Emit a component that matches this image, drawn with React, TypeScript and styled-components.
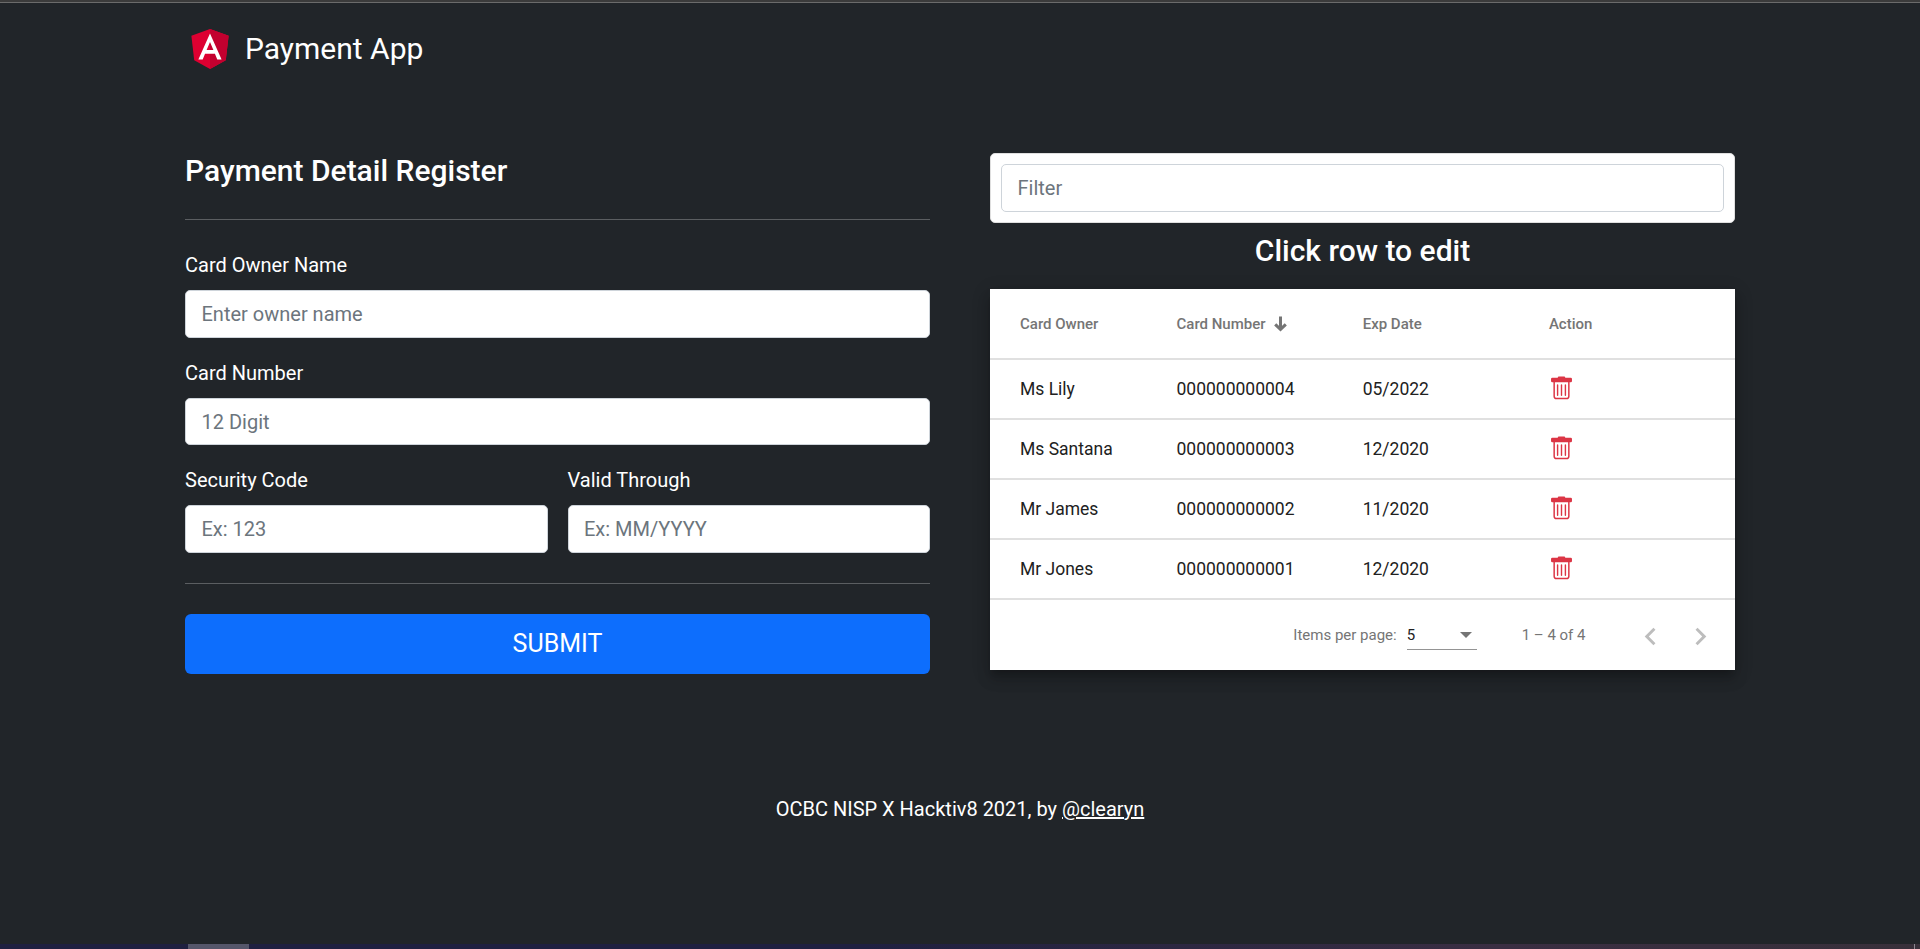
import React from 'react';
import styled, { createGlobalStyle } from 'styled-components';

const GlobalStyle = createGlobalStyle`
  *, *::before, *::after { box-sizing: border-box; }
  body {
    margin: 0;
    background: #212529;
    color: #fff;
    font-family: Roboto, "Liberation Sans", sans-serif;
    font-size: 20px;
    line-height: 30px;
    overflow: hidden;
  }
`;

const Page = styled.div`
  height: 949px;
  display: flex;
  flex-direction: column;
`;

const TopStrip = styled.div`
  height: 3px;
  flex: none;
  background: #3b3b3b;
  border-bottom: 1px solid #6b6b6b;
`;

const Container = styled.div`
  width: 1550px;
  margin: 0 auto;
`;

const Navbar = styled.header`
  height: 150px;
  padding-top: 20px;
  display: flex;
  align-items: flex-start;
`;

const Logo = styled.svg`
  width: 50px;
  height: 50px;
`;

const Brand = styled.span`
  margin: 8px 0 0 10px;
  font-size: 30px;
  line-height: 36px;
`;

const Columns = styled.main`
  height: 640px;
  display: grid;
  grid-template-columns: 745px 745px;
  column-gap: 60px;
  align-items: start;
`;

const Heading = styled.h4<{ $center?: boolean }>`
  margin: 0;
  font-size: 30px;
  font-weight: 500;
  line-height: 36px;
  text-align: ${(p) => (p.$center ? 'center' : 'left')};
`;

const Rule = styled.hr`
  height: 1px;
  margin: 30px 0;
  border: 0;
  background: #5b5e61;
`;

const Fields = styled.div`
  display: grid;
  grid-template-columns: 1fr 1fr;
  gap: 20px;
  padding-top: 0.25px;
`;

const Field = styled.label<{ $wide?: boolean }>`
  display: flex;
  flex-direction: column;
  gap: 10px;
  grid-column: ${(p) => (p.$wide ? '1 / -1' : 'auto')};
`;

const Input = styled.input`
  width: 100%;
  height: 47.5px;
  padding: 0 15px 0 15.5px;
  border: 1px solid #ced4da;
  border-radius: 5px;
  background: #fff;
  color: #212529;
  font: 400 20px/30px Roboto, "Liberation Sans", sans-serif;
  &::placeholder { color: #6c757d; opacity: 1; }
`;

const Submit = styled.button`
  display: block;
  width: 100%;
  height: 60px;
  border: 0;
  border-radius: 6px;
  background: #0d6efd;
  color: #fff;
  font: 400 25px/37px Roboto, "Liberation Sans", sans-serif;
`;

const FilterCard = styled.div`
  height: 70px;
  margin-bottom: 10px;
  padding: 10px;
  border: 1px solid #dfdfdf;
  border-radius: 5px;
  background: #fff;
`;

const TableCard = styled.section`
  height: 381px;
  margin-top: 20px;
  background: #fff;
  color: #212121;
  box-shadow: 0 6px 6px -4px rgba(0, 0, 0, 0.2), 0 10px 12px 1px rgba(0, 0, 0, 0.14),
    0 4px 17px 2px rgba(0, 0, 0, 0.12);
`;

const Row = styled.div<{ $head?: boolean }>`
  height: ${(p) => (p.$head ? 71 : 60)}px;
  padding-left: 30px;
  display: grid;
  grid-template-columns: 156.5px 186.2px 186.2px 1fr;
  align-items: center;
  border-bottom: 2px solid #e0e0e0;
  color: ${(p) => (p.$head ? '#757575' : '#212121')};
  font-size: ${(p) => (p.$head ? 15 : 17.5)}px;
  font-weight: ${(p) => (p.$head ? 500 : 400)};
`;

const Cell = styled.div`
  display: flex;
  align-items: center;
`;

const SortArrow = styled.svg`
  width: 15px;
  height: 16px;
  margin-left: 7px;
`;

const Trash = styled.svg`
  width: 25px;
  height: 25px;
  margin-bottom: 3px;
`;

const Paginator = styled.div`
  height: 70px;
  padding-right: 9.5px;
  display: flex;
  align-items: center;
  justify-content: flex-end;
  color: #757575;
  font-size: 15px;
`;

const PageSize = styled.div`
  width: 70px;
  height: 30px;
  margin: 0 45px 0 10px;
  padding: 0 5px 0 0;
  display: flex;
  align-items: center;
  justify-content: space-between;
  border-bottom: 1px solid #949494;
  color: #212121;
`;

const Range = styled.span`
  margin-right: 40px;
`;

const PageButton = styled.div`
  width: 50px;
  height: 50px;
  padding: 3px 0 0;
  display: flex;
  align-items: center;
  justify-content: center;
`;

const Footer = styled.footer`
  text-align: center;
  flex: 1;
  padding-top: 1px;
  a { color: #fff; text-decoration: underline; }
`;

const BottomStrip = styled.div`
  height: 5px;
  flex: none;
  padding: 0 5px 0 188px;
  display: flex;
  justify-content: space-between;
  background: linear-gradient(90deg, #1f2040 0%, #1f2040 45%, #3a2e42 78%, #38303a 100%);
`;

const ActiveMark = styled.div`
  width: 61px;
  background: #55566a;
`;

const EdgeMark = styled.div`
  width: 1px;
  background: #8b8790;
`;

const rows = [
  ['Ms Lily', '000000000004', '05/2022'],
  ['Ms Santana', '000000000003', '12/2020'],
  ['Mr James', '000000000002', '11/2020'],
  ['Mr Jones', '000000000001', '12/2020'],
];

const AngularLogo = () => (
  <Logo viewBox="0 0 250 250">
    <path fill="#dd0031" d="M125 30 31.9 63.2l14.2 123.1L125 230l78.9-43.7 14.2-123.1z" />
    <path fill="#c3002f" d="M125 30v200l78.9-43.7 14.2-123.1z" />
    <path
      fill="#fff"
      d="M125 52.1 66.8 182.6h21.7l11.7-29.2h49.4l11.7 29.2H183zm17 83.3h-34l17-40.9z"
    />
  </Logo>
);

const TrashIcon = () => (
  <Trash viewBox="0 0 16 16" fill="#dc3545">
    <path d="M6 .9h4l.5.9h3.4q.8 0 .8.8v1.3q0 .8-.8.8H2.1q-.8 0-.8-.8V2.6q0-.8.8-.8h3.4z" />
    <path
      d="M3.3 4v9.6q0 1.5 1.5 1.5h6.4q1.5 0 1.5-1.5V4"
      fill="none"
      stroke="#dc3545"
      strokeWidth="0.95"
    />
    <path d="M5.5 6.4v6.6M8 6.4v6.6M10.5 6.4v6.6" stroke="#dc3545" strokeWidth="0.9" strokeLinecap="round" />
  </Trash>
);

const Chevron = ({ right }: { right?: boolean }) => (
  <svg width="35" height="35" viewBox="0 0 24 24" fill="#bdbdbd">
    <path
      d={
        right
          ? 'M10 6 8.59 7.41 13.17 12l-4.58 4.59L10 18l6-6z'
          : 'M15.41 7.41 14 6l-6 6 6 6 1.41-1.41L10.83 12z'
      }
    />
  </svg>
);

export default function App() {
  return (
    <Page>
      <GlobalStyle />
      <TopStrip />
      <Container>
        <Navbar>
          <AngularLogo />
          <Brand>Payment App</Brand>
        </Navbar>
        <Columns>
          <form>
            <Heading>Payment Detail Register</Heading>
            <Rule />
            <Fields>
              <Field $wide>
                Card Owner Name
                <Input placeholder="Enter owner name" />
              </Field>
              <Field $wide>
                Card Number
                <Input placeholder="12 Digit" />
              </Field>
              <Field>
                Security Code
                <Input placeholder="Ex: 123" />
              </Field>
              <Field>
                Valid Through
                <Input placeholder="Ex: MM/YYYY" />
              </Field>
            </Fields>
            <Rule />
            <Submit type="button">SUBMIT</Submit>
          </form>
          <div>
            <FilterCard>
              <Input placeholder="Filter" />
            </FilterCard>
            <Heading $center>Click row to edit</Heading>
            <TableCard>
              <Row $head>
                <Cell>Card Owner</Cell>
                <Cell>
                  Card Number
                  <SortArrow viewBox="0 0 15 16" fill="none" stroke="#757575" strokeWidth="3">
                    <path d="M7.5 .5v13M2.2 8.3l5.3 5.1 5.3-5.1" />
                  </SortArrow>
                </Cell>
                <Cell>Exp Date</Cell>
                <Cell>Action</Cell>
              </Row>
              {rows.map(([owner, number, date]) => (
                <Row key={number}>
                  <Cell>{owner}</Cell>
                  <Cell>{number}</Cell>
                  <Cell>{date}</Cell>
                  <Cell>
                    <TrashIcon />
                  </Cell>
                </Row>
              ))}
              <Paginator>
                Items per page:
                <PageSize>
                  5
                  <svg width="12" height="6" viewBox="0 0 12 6" fill="#757575">
                    <path d="M0 0h12L6 6z" />
                  </svg>
                </PageSize>
                <Range>1 – 4 of 4</Range>
                <PageButton>
                  <Chevron />
                </PageButton>
                <PageButton>
                  <Chevron right />
                </PageButton>
              </Paginator>
            </TableCard>
          </div>
        </Columns>
      </Container>
      <Footer>
        OCBC NISP X Hacktiv8 2021, by <a>@clearyn</a>
      </Footer>
      <BottomStrip>
        <ActiveMark />
        <EdgeMark />
      </BottomStrip>
    </Page>
  );
}
